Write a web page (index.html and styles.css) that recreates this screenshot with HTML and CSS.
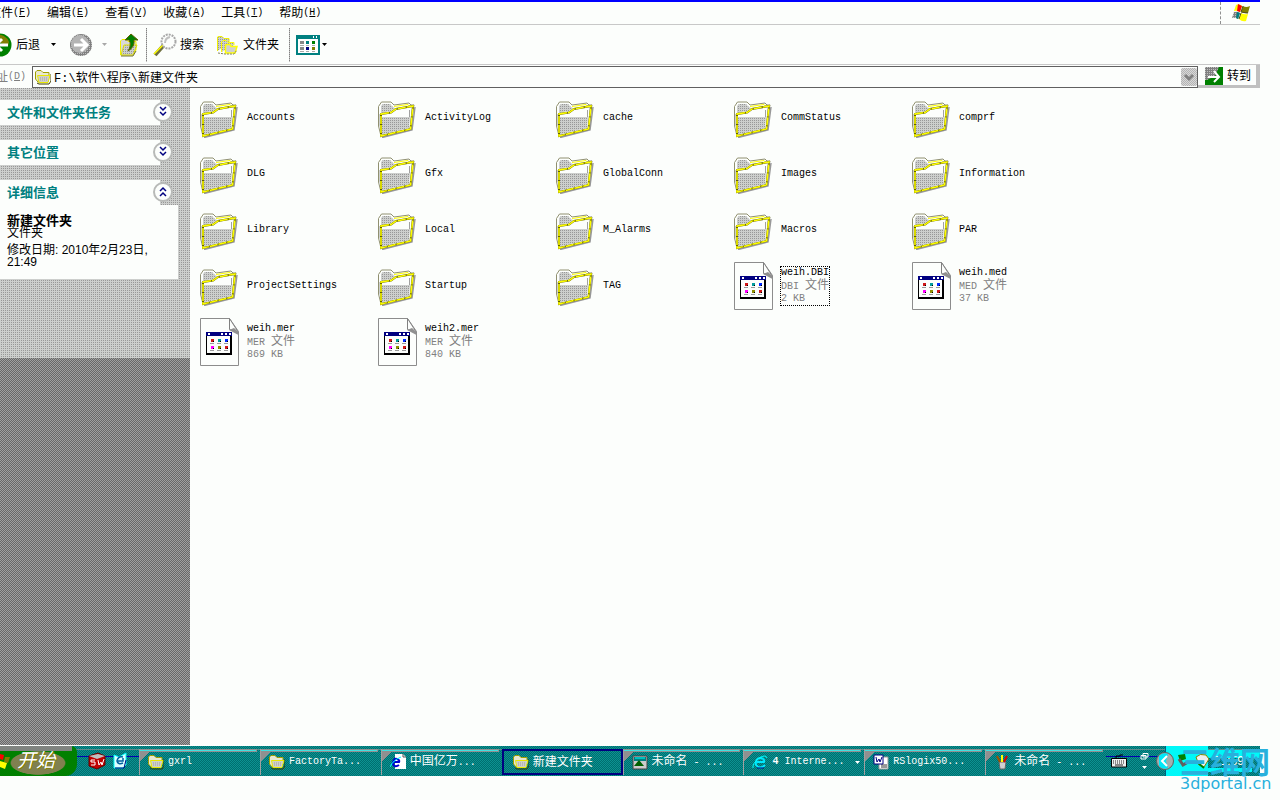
FILE: index.html
```html
<!DOCTYPE html>
<html lang="zh-CN">
<head>
<meta charset="utf-8">
<title>新建文件夹</title>
<link rel="stylesheet" href="styles.css">
</head>
<body>
<svg class="defs" aria-hidden="true">
  <defs>
    <pattern id="dots" width="2" height="2" patternUnits="userSpaceOnUse"><rect width="2" height="2" fill="#cdcfcd"/><rect width="1" height="1" fill="#989898"/></pattern>
    <pattern id="edge" width="2" height="2" patternUnits="userSpaceOnUse"><rect width="2" height="2" fill="#808080"/><rect width="1" height="1" fill="#c0c0c0"/></pattern>
    <symbol id="folder" viewBox="0 0 40 40">
      <path d="M4 39.500 L34 32 L37 9" fill="none" stroke="#989898" stroke-width="1.500"/>
      <path d="M3 38 L.5 28 V8.500 L3.500 4 H13 L16 7 L31 5 L33 7 H36 L35 12 L20 20 Z" fill="#fcfefc" stroke="#909070"/>
      <path d="M3 8 L5 6 H12 L15 9 L17 10 L13 13 L3 15 Z" fill="url(#dots)"/>
      <path d="M1 16 H3 V34 L1 27 Z" fill="url(#dots)"/>
      <path d="M16 8.500 L30 6.500 L32 8.500 H36" fill="none" stroke="#ff0"/>
      <path d="M3 16 L13 14.500 L18 11 L35 8 L32.500 31 L3 38 Z" fill="#fcfefc" stroke="#606000" stroke-width="2"/>
      <path d="M4 19 H32 L31 30 L4 36.500 Z" fill="url(#dots)"/>
      <path d="M3 16 L13 14.500 L18 11 L35 8 L32.500 31 L3 38 Z" fill="none" stroke="#ff0" stroke-width="1.500" stroke-dasharray="8 1"/>
      <path d="M31.500 12 V19" stroke="#a0a0a0"/>
    </symbol>
    <symbol id="doc" viewBox="0 0 40 48">
      <path d="M.5 .5 H29.500 L38.500 13.500 V47.500 H.5 Z" fill="#fcfefc" stroke="#8c8c8c"/>
      <path d="M29.500 .5 V11.500 L38.500 14.500 Z" fill="#fcfefc" stroke="#808080"/>
      <path d="M29 12 L34 10 L38.500 14 V17 Z" fill="#909090"/>
      <path d="M6 14 H32 V37 H6 Z" fill="#000"/>
      <path d="M7 18 H30 V35 H7 Z" fill="#fcfefc"/>
      <path d="M6 14 H32 V18 H6 Z" fill="#000080"/>
      <path d="M8 16 H10 M21 16 H23 M25 16 H27 M29 16 H31" stroke="#fff" stroke-width="2"/>
      <path d="M10 25.500 H14 M17 25.500 H21 M24 25.500 H28 M10 32.500 H14 M17 32.500 H21 M24 32.500 H28" stroke="#999"/>
      <path d="M11 21 H14 V24 H11 Z M25 28 H28 V31 H25 Z" fill="#d01818"/>
      <path d="M18 21 H21 V24 H18 Z" fill="#009c9c"/>
      <path d="M25 21 H28 V24 H25 Z" fill="#0028ff"/>
      <path d="M11 28 H14 V31 H11 Z" fill="#f0f"/>
      <path d="M18 28 H21 V31 H18 Z" fill="#909000"/>
      <path d="M13 23 h1 v1 h-1z M20 23 h1 v1 h-1z M27 23 h1 v1 h-1z M13 30 h1 v1 h-1z M20 30 h1 v1 h-1z M27 30 h1 v1 h-1z" fill="#000"/>
    </symbol>
    <symbol id="small-folder" viewBox="0 0 16 16">
      <path d="M2 14 L4 15 H14 L16 12 V5" fill="none" stroke="#404000"/>
      <path d="M.5 3 L2 1.500 H6 L8 3.500 H14 V6 L13 13 H3 L.5 10 Z" fill="#e8e8d0" stroke="#a0a000"/>
      <path d="M2.500 6.500 H15 L13 13.500 H4 Z" fill="#d0d0c8" stroke="#e8e800"/>
      <path d="M5 9 H13 M5 11 H12" stroke="#a0a0a0" stroke-dasharray="1 1"/>
    </symbol>
    <symbol id="down" viewBox="0 0 16 16"><path d="M5 3 L8 6 L11 3 M5 8 L8 11 L11 8" fill="none" stroke="#000080" stroke-width="1.500"/></symbol>
    <symbol id="up" viewBox="0 0 16 16"><path d="M5 7 L8 4 L11 7 M5 12 L8 9 L11 12" fill="none" stroke="#000080" stroke-width="1.500"/></symbol>
  </defs>
</svg>
<div class="window">
  <header class="menubar">
    <nav class="menus">
      <button>文件<span class="en">(<u>F</u>)</span></button>
      <button>编辑<span class="en">(<u>E</u>)</span></button>
      <button>查看<span class="en">(<u>V</u>)</span></button>
      <button>收藏<span class="en">(<u>A</u>)</span></button>
      <button>工具<span class="en">(<u>T</u>)</span></button>
      <button>帮助<span class="en">(<u>H</u>)</span></button>
    </nav>
    <div class="brand">
      <svg width="20" height="20" viewBox="0 0 20 20">
        <path d="M5 2 Q8 0 11 3 L9 9 Q6 7 3 8 Z" fill="#ff0"/><path d="M7 1 L11 3 L9 9 L6 8 Z" fill="#f00"/>
        <path d="M12 3 Q15 5 19 3 L17 10 Q13 11 10 9 Z" fill="#808000"/>
        <path d="M3 9 Q6 8 9 10 L7 16 Q4 14 1 15 Z" fill="url(#edge)"/><path d="M6 9 L9 10 L7 16 L5 15 Z" fill="#008080"/>
        <path d="M10 10 Q13 12 17 11 L15 18 Q11 19 8 16 Z" fill="#ff0"/><path d="M12 3 L10 9 L17 10 M10 10 L8 16" fill="none" stroke="#505020"/>
      </svg>
    </div>
  </header>

  <div class="toolbar">
    <button class="tool back">
      <svg width="24" height="24" viewBox="0 0 24 24"><circle cx="12" cy="12" r="11.500" fill="#008000"/><path d="M8 2 A11 11 0 0 1 21 9 L20 13 L8 8Z" fill="#808000"/><path d="M20 12 H5 M14 6 L8 12 L14 18" fill="none" stroke="#fff" stroke-width="3"/></svg>
      后退
    </button>
    <button class="drop" aria-label="后退列表"><svg width="5" height="3" viewBox="0 0 5 3"><path d="M0 0 H5 L2.500 3Z"/></svg></button>
    <button class="tool forward" aria-label="前进"><svg width="24" height="24" viewBox="0 0 24 24"><circle cx="12" cy="12" r="11" fill="url(#edge)"/><circle cx="11" cy="11" r="9" fill="#b4b4b4"/><path d="M5 12 H18 M12 6 L18 12 L12 18" fill="none" stroke="#fff" stroke-width="3"/></svg></button>
    <button class="drop faded" aria-label="前进列表"><svg width="5" height="3" viewBox="0 0 5 3"><path d="M0 0 H5 L2.500 3Z"/></svg></button>
    <button class="tool parent" aria-label="向上">
      <svg width="20" height="24" viewBox="0 0 20 24"><path d="M1.500 22 V8 L3 6.500 H7 L9 8.500 H17 V17 L14 22 Z" fill="#d8d8d8" stroke="#f0f000"/><path d="M2 22 L5 12 H18 L14 22Z" fill="url(#dots)" stroke="#e0e000"/><path d="M2 23 H14 L17 18" fill="none" stroke="#707040"/><path d="M12 1 L19 7 H15 Q16 14 9 18 Q13 12 10 7 H6 Z" fill="#008000" stroke="#606000"/></svg>
    </button>
    <span class="sep"></span>
    <button class="tool search">
      <svg width="24" height="24" viewBox="0 0 24 24"><path d="M11 12 L2 22" stroke="#707040" stroke-width="4"/><path d="M10 12 L1 21" stroke="#ff0" stroke-width="1.500"/><circle cx="15.500" cy="8.500" r="7" fill="#fcfefc" stroke="#a8a8a8" stroke-width="2" stroke-dasharray="2 1"/><path d="M12 10 Q12 5 17 4" fill="none" stroke="#c0c0c0" stroke-width="2"/></svg>
      搜索
    </button>
    <button class="tool folders">
      <svg width="22" height="20" viewBox="0 0 22 20"><path d="M1.500 16 V2 L3 1.500 H6 L8 3.500 H13 V8" fill="url(#dots)" stroke="#f0f000"/><path d="M5.500 17 V7 L7 5.500 H10 L12 7.500 H18 V10" fill="url(#dots)" stroke="#ff0"/><path d="M9.500 18 V10 L11 9.500 H14 L15 11.500 H21 L19 18 Z" fill="#d0d0d0" stroke="#ff0" stroke-width="1.500"/><path d="M2 18 L9 19 H18 L21 15" fill="none" stroke="#808060" stroke-dasharray="2 1"/></svg>
      文件夹
    </button>
    <span class="sep"></span>
    <button class="tool views" aria-label="查看">
      <svg width="24" height="20" viewBox="0 0 24 20"><path d="M1 1 H23 V19 H1 Z" fill="#fff" stroke="#008080" stroke-width="2"/><path d="M0 0 H24 V4 H0 Z" fill="#008080"/><path d="M17 2 h1 M20 2 h1" stroke="#fff" stroke-width="2"/><path d="M4 6h4v3H4z M4 12h4v3H4z" fill="#888"/><path d="M10 6h3v3h-3z" fill="#008080"/><path d="M16 6h3v3h-3z" fill="#008000"/><path d="M10 12h3v3h-3z" fill="#000080"/><path d="M16 12h3v3h-3z" fill="#808000"/><path d="M4 10.500h4M10 10.500h3M16 10.500h3M4 16.500h4M10 16.500h3M16 16.500h3" stroke="#aaa"/></svg>
      <svg width="5" height="3" viewBox="0 0 5 3"><path d="M0 0 H5 L2.500 3Z"/></svg>
    </button>
  </div>

  <div class="addressbar">
    <label for="address">地址<span class="en">(<u>D</u>)</span></label>
    <div class="combo">
      <svg width="16" height="16"><use href="#small-folder"/></svg>
      <input id="address" type="text" value="F:\软件\程序\新建文件夹">
      <button class="combo-arrow" aria-label="地址列表"><svg width="16" height="18" viewBox="0 0 16 18"><path d="M4 7 L8 11 L12 7" fill="none" stroke="#808080" stroke-width="3"/></svg></button>
    </div>
    <button class="go">
      <svg width="18" height="18" viewBox="0 0 18 18"><path d="M0 0 H18 V18 H0Z" fill="#008000"/><path d="M0 0 H14 L10 9 L2 13 H0Z" fill="url(#edge)"/><path d="M3 10 H14 M9 4 L14 10 L9 15" fill="none" stroke="#fff" stroke-width="2"/></svg>
      转到
    </button>
  </div>

  <main class="content">
    <aside class="sidebar">
      <div class="panes">
        <section><h2>文件和文件夹任务<button aria-label="展开"><svg width="16" height="16"><use href="#down"/></svg></button></h2></section>
        <section><h2>其它位置<button aria-label="展开"><svg width="16" height="16"><use href="#down"/></svg></button></h2></section>
        <section>
          <h2>详细信息<button aria-label="收起"><svg width="16" height="16"><use href="#up"/></svg></button></h2>
          <div class="details">
            <strong>新建文件夹</strong>
            <p>文件夹</p>
            <p class="modified">修改日期: 2010年2月23日, 21:49</p>
          </div>
        </section>
      </div>
    </aside>
    <ul class="files">
      <li><svg width="40" height="40"><use href="#folder"/></svg><span class="en">Accounts</span></li>
      <li><svg width="40" height="40"><use href="#folder"/></svg><span class="en">ActivityLog</span></li>
      <li><svg width="40" height="40"><use href="#folder"/></svg><span class="en">cache</span></li>
      <li><svg width="40" height="40"><use href="#folder"/></svg><span class="en">CommStatus</span></li>
      <li><svg width="40" height="40"><use href="#folder"/></svg><span class="en">comprf</span></li>
      <li><svg width="40" height="40"><use href="#folder"/></svg><span class="en">DLG</span></li>
      <li><svg width="40" height="40"><use href="#folder"/></svg><span class="en">Gfx</span></li>
      <li><svg width="40" height="40"><use href="#folder"/></svg><span class="en">GlobalConn</span></li>
      <li><svg width="40" height="40"><use href="#folder"/></svg><span class="en">Images</span></li>
      <li><svg width="40" height="40"><use href="#folder"/></svg><span class="en">Information</span></li>
      <li><svg width="40" height="40"><use href="#folder"/></svg><span class="en">Library</span></li>
      <li><svg width="40" height="40"><use href="#folder"/></svg><span class="en">Local</span></li>
      <li><svg width="40" height="40"><use href="#folder"/></svg><span class="en">M_Alarms</span></li>
      <li><svg width="40" height="40"><use href="#folder"/></svg><span class="en">Macros</span></li>
      <li><svg width="40" height="40"><use href="#folder"/></svg><span class="en">PAR</span></li>
      <li><svg width="40" height="40"><use href="#folder"/></svg><span class="en">ProjectSettings</span></li>
      <li><svg width="40" height="40"><use href="#folder"/></svg><span class="en">Startup</span></li>
      <li><svg width="40" height="40"><use href="#folder"/></svg><span class="en">TAG</span></li>
      <li><svg width="40" height="48"><use href="#doc"/></svg><div class="info focused"><span class="en">weih.DBI</span><small><span class="en">DBI </span>文件</small><small class="en">2 KB</small></div></li>
      <li><svg width="40" height="48"><use href="#doc"/></svg><div class="info"><span class="en">weih.med</span><small><span class="en">MED </span>文件</small><small class="en">37 KB</small></div></li>
      <li><svg width="40" height="48"><use href="#doc"/></svg><div class="info"><span class="en">weih.mer</span><small><span class="en">MER </span>文件</small><small class="en">869 KB</small></div></li>
      <li><svg width="40" height="48"><use href="#doc"/></svg><div class="info"><span class="en">weih2.mer</span><small><span class="en">MER </span>文件</small><small class="en">840 KB</small></div></li>
    </ul>
  </main>
</div>

<footer class="taskbar">
  <button class="start">
    <svg width="12" height="20" viewBox="0 0 12 20"><path d="M0 3 L4 4 L3 9 L0 8Z" fill="#f00"/><path d="M5 6 L10 6 L8 12 L4 11Z" fill="#808000"/><path d="M0 10 L7 12 L5 18 L0 16Z" fill="#ff0"/></svg>
    开始
  </button>
  <div class="quick">
    <button aria-label="SolidWorks"><svg width="18" height="18" viewBox="0 0 18 18"><path d="M1 4 L10 1 L17 4 V13 L9 17 L1 14Z" fill="#c00000" stroke="#600000"/><path d="M1 4 L10 2 L17 4 L9 7Z" fill="#c0c0c0"/><path d="M7 8 H3 V10 H7 V13 H3 M10 8 L11 13 L13 10 L14 13 L16 7" fill="none" stroke="#fff"/></svg></button>
    <button aria-label="显示桌面"><svg width="18" height="18" viewBox="0 0 18 18"><path d="M3 3 L8 5 L15 1 V13 L12 16 H3 Z" fill="#dff" stroke="#0ff"/><path d="M4 16 H13 L15 8" fill="none" stroke="#000080"/><path d="M12 5 Q7 4 6 9 Q7 13 12 11 M7 9 H12 V6" fill="none" stroke="#0060a0" stroke-width="1.500"/></svg></button>
  </div>
  <div class="tasks">
    <button><svg width="16" height="16"><use href="#small-folder"/></svg><span class="en">gxrl</span></button>
    <button><svg width="16" height="16"><use href="#small-folder"/></svg><span class="en">FactoryTa...</span></button>
    <button><svg width="16" height="16" viewBox="0 0 16 16"><path d="M5 0 H13 L16 3 V15 H5Z" fill="#fff"/><path d="M13 0 V3 H16" fill="none" stroke="#555"/><path d="M9 11 Q5 14 3 10 Q3 4 7 5 Q10 6 9 8 H3" fill="none" stroke="#0000d0" stroke-width="2"/><path d="M0 13 Q3 6 11 3" fill="none" stroke="#0ff"/></svg><span>中国亿万<span class="en">...</span></span></button>
    <button class="active"><svg width="16" height="16"><use href="#small-folder"/></svg><span>新建文件夹</span></button>
    <button><svg width="16" height="16" viewBox="0 0 16 16"><path d="M1 2 H15 V15 H1Z" fill="#ccc" stroke="#444"/><path d="M2 3 H14 V7 H2Z" fill="#008080"/><path d="M3 4 H13" stroke="#0ff"/><path d="M2 12 L7 6 L12 12Z" fill="#006000"/></svg><span>未命名<span class="en"> - ...</span></span></button>
    <button><svg width="16" height="16" viewBox="0 0 16 16"><path d="M13 11 Q8 16 4 11 Q3 4 9 4 Q13 5 12 8 H5" fill="none" stroke="#00e8ff" stroke-width="2"/><path d="M1 14 Q0 10 7 4 Q14 0 15 4" fill="none" stroke="#0ff"/><path d="M5 14 H12" stroke="#000080"/></svg><span class="en"><b>4</b> Interne...</span><svg class="more" width="5" height="3" viewBox="0 0 5 3"><path d="M0 0 H5 L2.500 3Z" fill="#fff"/></svg></button>
    <button><svg width="16" height="16" viewBox="0 0 16 16"><path d="M6 3 H15 V15 H6Z" fill="#fff" stroke="#999"/><path d="M8 11 H14 M8 13 H14" stroke="#333"/><path d="M1 1 H10 V10 H1Z" fill="#fff" stroke="#000080"/><path d="M3 3 L4 8 L6 5 L7 8 L9 3" fill="none" stroke="#000080"/></svg><span class="en">RSlogix50...</span></button>
    <button><svg width="16" height="16" viewBox="0 0 16 16"><path d="M5 8 H12 L11 15 H6Z" fill="#d0d0d0" stroke="#666"/><path d="M6 8 L3 2" stroke="#a05000" stroke-width="2"/><path d="M8 8 V1" stroke="#ff0" stroke-width="2"/><path d="M10 8 L13 2" stroke="#e00000" stroke-width="2"/></svg><span>未命名<span class="en"> - ...</span></span></button>
  </div>
  <div class="language">
    <button aria-label="键盘"><svg width="16" height="14" viewBox="0 0 16 14"><path d="M5 4 V2 H9 V1 H12" fill="none" stroke="#000"/><path d="M.5 4.500 H15.500 V13 H.5Z" fill="#eee" stroke="#000"/><path d="M2 7 H14 M2 9 H14" stroke="#222" stroke-dasharray="1 1"/><path d="M4 11 H12" stroke="#222"/></svg></button>
    <button aria-label="语言栏选项"><svg width="9" height="18" viewBox="0 0 9 18"><path d="M3 1.500 H8 V5 H3Z M1 3.500 H6 V7 H1Z" fill="#008080" stroke="#fff"/><path d="M2 14 H7 L4.500 17Z" fill="#fff"/></svg></button>
  </div>
  <div class="tray">
    <button class="expand" aria-label="显示隐藏图标"><svg width="18" height="18" viewBox="0 0 18 18"><circle cx="9" cy="9" r="8.500" fill="#a0b0b0" stroke="#606060"/><path d="M3 4 A8 8 0 0 1 12 2 L10 9 L12 16 A8 8 0 0 1 3 14Z" fill="#00e8f8"/><path d="M11 4 L6 9 L11 14" fill="none" stroke="#fff" stroke-width="2"/></svg></button>
    <svg width="32" height="16" viewBox="0 0 32 16"><path d="M1 2 L8 1 L9 6 L3 8Z" fill="#008000"/><path d="M2 6 L6 12 L11 9" fill="none" stroke="#606060" stroke-width="3"/><path d="M19 4 Q23 0 29 2 L32 6 L27 14 L22 12 Z" fill="#eee" stroke="#808000"/><path d="M20 9 L27 15" stroke="#008000" stroke-width="2"/></svg>
    <time>21:59</time>
  </div>
</footer>
<div class="watermark"><span>三维网</span><span class="site">3dportal.cn</span></div>
</body>
</html>
```
FILE: styles.css
```css
* { box-sizing: border-box; }
body {
  margin: 0;
  min-height: 100vh;
  padding: 0 20px 24px 0;
  display: flex;
  flex-direction: column;
  position: relative;
  overflow-x: hidden;
  background: #fcfefc;
  color: #000;
  font: 12px/12px "Liberation Sans", "Noto Sans CJK SC", sans-serif;
}
button, input {
  font: inherit;
  color: inherit;
  background: none;
  border: 0;
  padding: 0;
  margin: 0;
}
button { display: flex; align-items: center; white-space: nowrap; flex: none; }
svg { display: block; flex: none; }
.defs { position: absolute; width: 0; height: 0; }
.en { font-family: "Liberation Mono", monospace; font-size: 10px; white-space: pre; }

.window { flex: 1; display: flex; flex-direction: column; border-top: 2px solid #0000ff; }

.menubar { display: flex; height: 23px; border-bottom: 1px solid #c8c8c8; }
.menus { flex: 1; display: flex; gap: 16px; margin-left: -11px; }
.brand { width: 40px; border-left: 1px dashed #909090; display: flex; align-items: center; justify-content: center; }

.toolbar { display: flex; align-items: center; height: 40px; border-bottom: 1px solid #c8c8c8; }
.tool { gap: 4px; }
.back { margin-left: -12px; }
.drop { width: 5px; margin-left: 11px; }
.forward { margin-left: 13px; }
.faded { fill: #a8a8a8; margin-left: 9px; }
.parent { margin-left: 12px; }
.sep { width: 1px; height: 34px; margin: 0 6px 0 7px; background: repeating-linear-gradient(#808080 0 1px, #c0c0c0 1px 2px); }
.search { gap: 3px; }
.folders { margin-left: 12px; gap: 5px; }
.folders + .sep { margin-left: 10px; }
.views { gap: 2px; }

.addressbar {
  display: flex;
  height: 23px;
  padding: 1px 0 0;
  color: #808080;
  border-right: 4px solid #c0c0c0;
  align-items: stretch;
}
.addressbar label { display: flex; align-items: center; margin-left: -16px; padding-right: 6px; }
.combo {
  flex: 1;
  display: flex;
  align-items: center;
  gap: 3px;
  padding-left: 2px;
  color: #000;
  border: 1px solid #606060;
}
.combo input { flex: 1; min-width: 0; height: 18px; font-family: "Liberation Mono", "Noto Sans CJK SC", monospace; }
.combo-arrow { height: 18px; border-radius: 2px; background: repeating-conic-gradient(#b4b4b4 0 25%, #d8d8d8 0 50%) 0 0 / 2px 2px; }
.go { gap: 4px; padding: 0 5px 0 7px; color: #000; border-bottom: 3px solid #c0c0c0; }

.content { flex: 1; display: flex; }
.sidebar { width: 190px; flex: none; background: repeating-conic-gradient(#686868 0 25%, #a0a0a0 0 50%) 0 0 / 2px 2px; }
.panes {
  display: flex;
  flex-direction: column;
  gap: 15px;
  padding: 12px 12px 79px 0;
  background: conic-gradient(#989898 25%, #cdcfcd 0) 0 0 / 2px 2px;
}
h2 {
  display: flex;
  align-items: center;
  justify-content: space-between;
  width: 160px;
  height: 25px;
  margin: 0;
  padding-left: 7px;
  background: #fcfefc;
  color: #008080;
  font-size: 13px;
  font-weight: bold;
}
h2 button {
  margin: 0 -13px 2px 0;
  border: 2px solid #b8bab8;
  border-radius: 50%;
  background: #fcfefc;
}
.details { padding: 10px 16px 10px 7px; background: #fcfefc; }
.details strong { display: block; font-size: 13px; }
.details p { margin: 0; }
.details .modified { margin-top: 5px; padding-bottom: 1px; }

.files {
  flex: 1;
  display: grid;
  grid-template-columns: repeat(auto-fill, 178px);
  grid-auto-rows: 56px;
  align-content: start;
  margin: 0;
  padding: 2px 0 0 10px;
  list-style: none;
}
.files li { display: flex; align-items: center; gap: 7px; }
.info { display: flex; flex-direction: column; }
.info small { font-size: 12px; color: #808080; }
.info small.en { font-size: 10px; }
.focused { outline: 1px dotted #000; }

.taskbar {
  display: flex;
  height: 31px;
  border-top: 1px solid #fcfefc;
  color: #fff;
  background:
    linear-gradient(#608c8c, #608c8c) 0 3px / 100% 1px no-repeat,
    repeating-conic-gradient(#006e6e 0 25%, #0c9292 0 50%) 0 0 / 2px 2px;
}
.start {
  width: 77px;
  gap: 5px;
  border-radius: 0 6px 12px 0;
  font-size: 19px;
  font-style: italic;
  background:
    linear-gradient(#808480, #808480) 0 0 / 72px 5px no-repeat,
    radial-gradient(ellipse 28px 12px at 38px 17px, #808050 95%, transparent),
    #008000;
  text-shadow: 1px 1px 0 #808000;
}
.quick { width: 62px; display: flex; gap: 5px; padding-left: 11px; background: linear-gradient(#0000b0, #0000b0) 0 10px / 100% 1px no-repeat; }
.tasks { flex: 1; display: grid; grid-template-columns: repeat(8, minmax(0, 1fr)); }
.tasks button {
  gap: 4px;
  margin: 3px 0 1px;
  padding: 0 4px 0 8px;
  border-left: 1px solid #a0a0a0;
  background:
    linear-gradient(#40e0e0, #40e0e0) 0 1px / calc(100% - 4px) 1px no-repeat,
    linear-gradient(#909090, #909090) 0 0 / calc(100% - 3px) 3px no-repeat,
    linear-gradient(135deg, #909090 9px, transparent 9px);
}
.tasks .active { padding-left: 9px; border: 2px solid #000080; background: none; }
.tasks .more { margin-left: auto; }
.language { width: 59px; display: flex; align-items: center; justify-content: flex-end; gap: 13px; padding-right: 16px; background: linear-gradient(#0000b0, #0000b0) 0 10px / 100% 1px no-repeat; }
.tray {
  width: 95px;
  display: flex;
  align-items: center;
  gap: 3px;
  border-left: 1px solid #006080;
  background:
    linear-gradient(#00f8f8, #00f8f8) 0 0 / 42px 100% no-repeat,
    linear-gradient(#00f8f8, #00f8f8) 0 4px / 100% 8px no-repeat,
    linear-gradient(#00f8f8, #00f8f8) 0 22px / 86px 4px no-repeat;
}
.tray .expand { margin-left: -10px; }
.tray time { margin-left: 2px; }

.watermark {
  position: absolute;
  right: 10px;
  bottom: 8px;
  width: 90px;
  color: #28b0dc;
  font-size: 30px;
  line-height: 26px;
  font-weight: bold;
  white-space: nowrap;
}
.watermark span { display: block; }
.watermark .site { font: 16px/16px "DejaVu Sans", sans-serif; }
```
